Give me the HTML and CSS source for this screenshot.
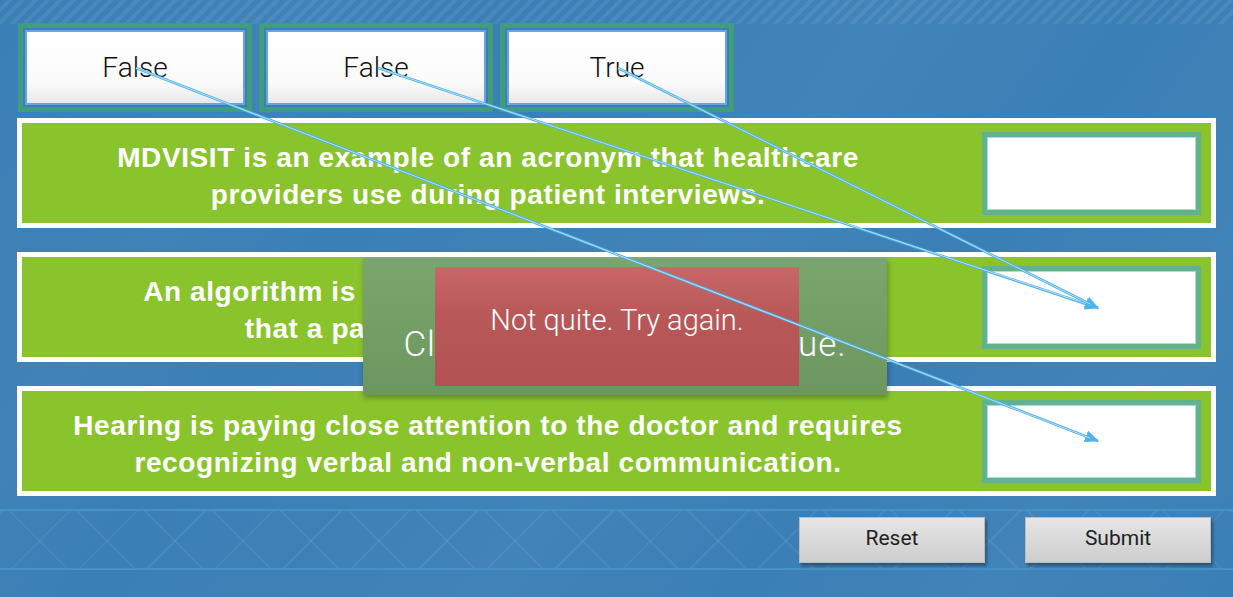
FILE: index.html
```html
<!DOCTYPE html>
<html>
<head>
<meta charset="utf-8">
<link rel="stylesheet" href="styles.css">
</head>
<body>
<div class="page">
  <div class="options">
    <div class="opt"><div class="opt-inner">False</div></div>
    <div class="opt"><div class="opt-inner">False</div></div>
    <div class="opt"><div class="opt-inner">True</div></div>
  </div>

  <div class="rows">
    <div class="row">
      <div class="q">MDVISIT is an example of an acronym that healthcare<br>providers use during patient interviews.</div>
      <div class="drop"><div class="drop-inner"></div></div>
    </div>
    <div class="row">
      <div class="q">An algorithm is very detailed, step-by-step advice<br>that a patient follows at every visit.</div>
      <div class="drop"><div class="drop-inner"></div></div>
    </div>
    <div class="row">
      <div class="q">Hearing is paying close attention to the doctor and requires<br>recognizing verbal and non-verbal communication.</div>
      <div class="drop"><div class="drop-inner"></div></div>
    </div>
  </div>

  <div class="footer">
    <div class="btn">Reset</div>
    <div class="btn">Submit</div>
  </div>

  <div class="feedback">
    <div class="feedback-text">Click anywhere to continue.</div>
    <div class="feedback-msg">Not quite. Try again.</div>
  </div>

  <svg class="links" width="1233" height="597" viewBox="0 0 1233 597">
    <defs>
      <marker id="ah" markerUnits="userSpaceOnUse" markerWidth="14" markerHeight="12" refX="13" refY="6" orient="auto">
        <path d="M0,0 L14,6 L0,12 Z" fill="#4fb2ec"/>
      </marker>
    </defs>
    <line x1="136" y1="68" x2="1098" y2="441" class="l-out" marker-end="url(#ah)"/>
    <line x1="136" y1="68" x2="1090" y2="438" class="l-in"/>
    <line x1="378" y1="68" x2="1098" y2="308" class="l-out" marker-end="url(#ah)"/>
    <line x1="378" y1="68" x2="1090" y2="305" class="l-in"/>
    <line x1="618" y1="68" x2="1098" y2="308" class="l-out" marker-end="url(#ah)"/>
    <line x1="618" y1="68" x2="1090" y2="304" class="l-in"/>
  </svg>
</div>
</body>
</html>
```

FILE: styles.css
```css
html, body {
  margin: 0;
  padding: 0;
}

body {
  width: 1233px;
  height: 597px;
  overflow: hidden;
  font-family: "Roboto", "Liberation Sans", sans-serif;
}

.page {
  position: relative;
  width: 1233px;
  height: 597px;
  box-sizing: border-box;
  padding-top: 23px;
  background:
    repeating-linear-gradient(135deg, rgba(255,255,255,0) 0px, rgba(255,255,255,0) 5px, rgba(255,255,255,0.07) 5px, rgba(255,255,255,0.07) 9px) top left / 100% 24px no-repeat,
    linear-gradient(125deg, rgba(255,255,255,0) 0%, rgba(255,255,255,0.03) 20%, rgba(255,255,255,0) 30%, rgba(255,255,255,0.04) 55%, rgba(255,255,255,0) 70%, rgba(255,255,255,0.04) 85%, rgba(255,255,255,0) 100%),
    #3a7fb6;
}

.options {
  display: flex;
  gap: 7px;
  padding-left: 18px;
}

.opt {
  width: 234px;
  height: 89px;
  box-sizing: border-box;
  border: 5px solid #3f9d7d;
  padding: 2px;
  background: #3a7fb6;
}

.opt-inner {
  height: 100%;
  box-sizing: border-box;
  border: 2px solid #69a3e4;
  background: linear-gradient(#ffffff 0%, #fbfbfb 70%, #e9e9e9 100%);
  display: flex;
  align-items: center;
  justify-content: center;
  font-family: "Roboto", "Liberation Sans", sans-serif;
  font-weight: 300;
  font-size: 28px;
  color: #111;
  padding-bottom: 1px;
}

.rows {
  display: flex;
  flex-direction: column;
  gap: 24px;
  margin-top: 6px;
  padding-left: 17px;
}

.row {
  width: 1199px;
  height: 110px;
  box-sizing: border-box;
  border: 5px solid #ffffff;
  background: #8ac42c;
  display: flex;
  align-items: center;
}

.q {
  flex: 1;
  padding-right: 28px;
  padding-top: 5px;
  text-align: center;
  color: #ffffff;
  font-family: "Liberation Sans", Arial, sans-serif;
  font-weight: 700;
  font-size: 28px;
  line-height: 37px;
  letter-spacing: 0.6px;
  white-space: nowrap;
}

.drop {
  width: 219px;
  height: 83px;
  box-sizing: border-box;
  border: 5px solid #62b38b;
  margin-right: 10px;
  margin-top: 1px;
}

.drop-inner {
  height: 100%;
  box-sizing: border-box;
  border: 1px solid #a9dbe3;
  background: #ffffff;
}

.footer {
  margin-top: 13px;
  height: 61px;
  box-sizing: border-box;
  border-top: 2px solid #4791c9;
  border-bottom: 2px solid #4791c9;
  display: flex;
  align-items: center;
  justify-content: flex-end;
  gap: 40px;
  padding-right: 22px;
  background:
    repeating-linear-gradient(45deg, rgba(255,255,255,0) 0px, rgba(255,255,255,0) 46px, rgba(255,255,255,0.06) 46px, rgba(255,255,255,0.06) 48px),
    repeating-linear-gradient(-45deg, rgba(255,255,255,0) 0px, rgba(255,255,255,0) 46px, rgba(255,255,255,0.06) 46px, rgba(255,255,255,0.06) 48px);
}

.btn {
  width: 186px;
  height: 46px;
  box-sizing: border-box;
  background: linear-gradient(#e6e6e6, #cdcdcd);
  border: 1px solid #bdbdbd;
  box-shadow: 2px 3px 3px rgba(0, 0, 0, 0.35);
  display: flex;
  align-items: center;
  justify-content: center;
  padding-bottom: 4px;
  font-family: "Roboto", "Liberation Sans", sans-serif;
  font-size: 21px;
  color: #222;
}

.feedback {
  position: absolute;
  left: 363px;
  top: 258px;
  width: 524px;
  height: 137px;
  background: linear-gradient(#7aa66d, #6c965f);
  box-shadow: 1px 3px 5px rgba(0, 0, 0, 0.3);
}

.feedback-text {
  position: absolute;
  left: 0;
  right: 0;
  top: 67px;
  text-align: center;
  color: #ffffff;
  font-family: "Roboto", "Liberation Sans", sans-serif;
  font-weight: 300;
  font-size: 35px;
  line-height: 40px;
  letter-spacing: 0.9px;
  white-space: nowrap;
}

.feedback-msg {
  position: absolute;
  left: 72px;
  top: 9px;
  width: 364px;
  height: 119px;
  background: linear-gradient(#c96767, #b85858 40%, #b25252 100%);
  display: flex;
  align-items: center;
  justify-content: center;
  padding-bottom: 14px;
  box-sizing: border-box;
  color: #ffffff;
  font-family: "Roboto", "Liberation Sans", sans-serif;
  font-weight: 300;
  font-size: 29px;
}

.links {
  position: absolute;
  left: 0;
  top: 0;
  pointer-events: none;
}

.l-out {
  stroke: #4fb2ec;
  stroke-width: 2.6;
}

.l-in {
  stroke: #cdeafc;
  stroke-width: 0.8;
}
```
